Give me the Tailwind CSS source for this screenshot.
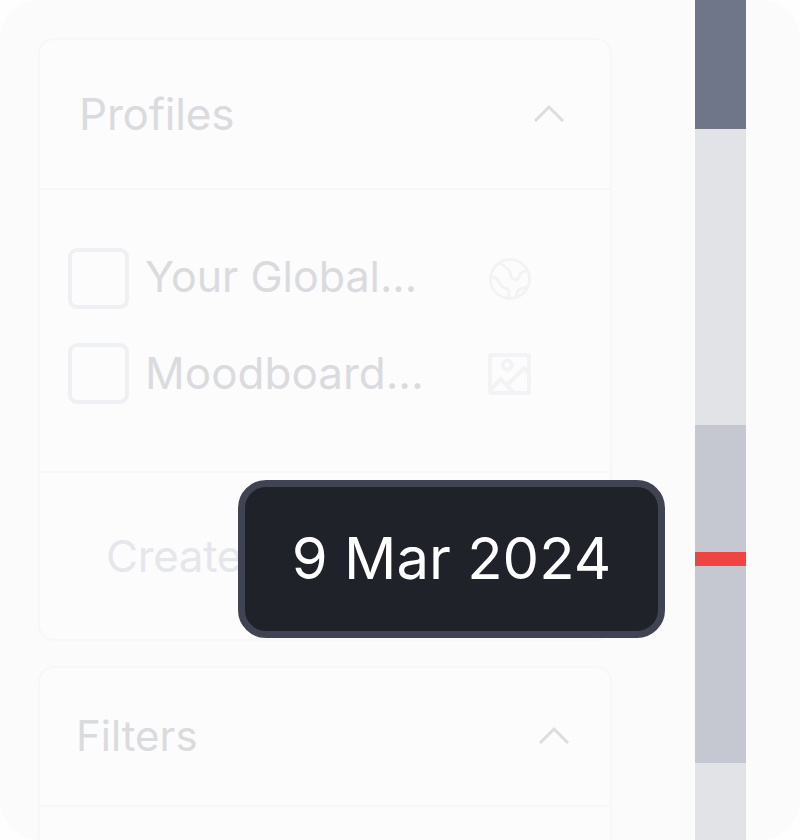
<!DOCTYPE html>
<html>
<head>
<meta charset="utf-8">
<script src="https://cdn.jsdelivr.net/npm/@tailwindcss/browser@4"></script>
</head>
<body class="bg-[#fefefe]">
<div class="relative w-[800px] h-[840px] overflow-hidden rounded-[40px] bg-[#fbfbfc] flex font-['Inter',sans-serif]">
  <div class="pt-[38px] pl-[38px] w-[656px] shrink-0 h-[840px] overflow-hidden flex flex-col gap-[25px]">
    <section class="w-[574px] h-[603px] shrink-0 rounded-[16px] border-2 border-[#f7f7f8] bg-[#fcfcfc] flex flex-col">
      <div class="h-[150px] shrink-0 border-b-2 border-[#f7f7f8] flex items-center justify-between pl-[39px] pr-[45px]">
        <span class="text-[44px] leading-none text-[#dadbde] tracking-[-0.2px]">Profiles</span>
        <svg width="32" height="20" viewBox="0 0 32 20" fill="none" stroke="#dcdde0" stroke-width="3"><path d="M2 17 L16 3 L30 17"/></svg>
      </div>
      <div class="h-[283px] shrink-0 border-b-2 border-[#f7f7f8] pl-[28px] pt-[58px] pr-[79px] flex flex-col gap-[34px]">
        <div class="flex items-center h-[61px]">
          <div class="w-[61px] h-[61px] rounded-[9px] border-[4px] border-[#eff0f3] shrink-0"></div>
          <span class="ml-[16px] mb-[4px] text-[43px] leading-none text-[#dadbde] flex-1">Your Global...</span>
          <svg width="42" height="42" viewBox="0 0 42 42" fill="none" stroke="#f3f3f5" stroke-width="3"><circle cx="21" cy="21" r="19.5"/><path d="M10 3.7 C12 6 17 9 20 12 C22 15 21 19 23.3 20.3 C26 22 28 21 28.3 21.3 C31 20 30 17 31.7 15.3 C33 13.5 36 13 38.3 12"/><path d="M0.7 18.7 C3 19 7 19 8.3 21.3 C10 23 10 26 11.7 27 C13 29 15 29.5 16.7 30.3 C19 31 20 32 20 33.7 C20 36 19.5 38 19.3 40.3"/><path d="M27.3 39.3 C27.5 37 27.5 35 28.3 33.7 C29.5 31.5 31 31 33.3 30.3 C35.5 29.5 37 29 39.3 28.7"/></svg>
        </div>
        <div class="flex items-center h-[61px]">
          <div class="w-[61px] h-[61px] rounded-[9px] border-[4px] border-[#eff0f3] shrink-0"></div>
          <span class="ml-[16px] mb-[2px] text-[44px] leading-none text-[#dadbde] flex-1">Moodboard...</span>
          <svg width="43" height="42" viewBox="0 0 43 42" fill="none" stroke="#f3f3f5" stroke-width="4"><rect x="2" y="2" width="39" height="38" rx="1.5"/><circle cx="19.3" cy="12" r="4.5"/><path d="M2.7 36.7 L12.7 26.3 L27 40.7"/><path d="M19.3 31.7 L36 15.3 L41.7 22"/></svg>
        </div>
      </div>
      <div class="flex-1 pl-[66px] flex items-center">
        <span class="text-[44px] leading-none text-[#e6e7ec] whitespace-nowrap tracking-[-0.4px]">Create profile</span>
      </div>
    </section>
    <section class="w-[574px] flex-1 rounded-t-[16px] border-2 border-b-0 border-[#f7f7f8] bg-[#fcfcfc]">
      <div class="h-[139px] border-b-2 border-[#f7f7f8] flex items-center justify-between pl-[36px] pr-[40px] pb-[2px]">
        <span class="text-[42px] leading-none text-[#dadbde]">Filters</span>
        <svg width="32" height="20" viewBox="0 0 32 20" fill="none" stroke="#dcdde0" stroke-width="3"><path d="M2 17 L16 3 L30 17"/></svg>
      </div>
    </section>
  </div>
  <div class="ml-[39px] w-[51px] h-[840px] shrink-0 flex flex-col relative">
    <div class="h-[129px] bg-[#6f7689]"></div>
    <div class="h-[296px] bg-[#e1e3e7]"></div>
    <div class="h-[338px] bg-[#c5c8d0]"></div>
    <div class="flex-1 bg-[#e1e3e7]"></div>
    <div class="absolute left-0 right-0 top-[552px] h-[14px] bg-[#ef4444]"></div>
  </div>
  <div class="absolute left-[238px] top-[480px] w-[427px] h-[158px] rounded-[28px] border-[7px] border-[#404452] bg-[#1f2229] flex items-center justify-center pb-[2px]">
    <span class="text-[58px] leading-none text-white whitespace-nowrap">9 Mar 2024</span>
  </div>
</div>
</body>
</html>
